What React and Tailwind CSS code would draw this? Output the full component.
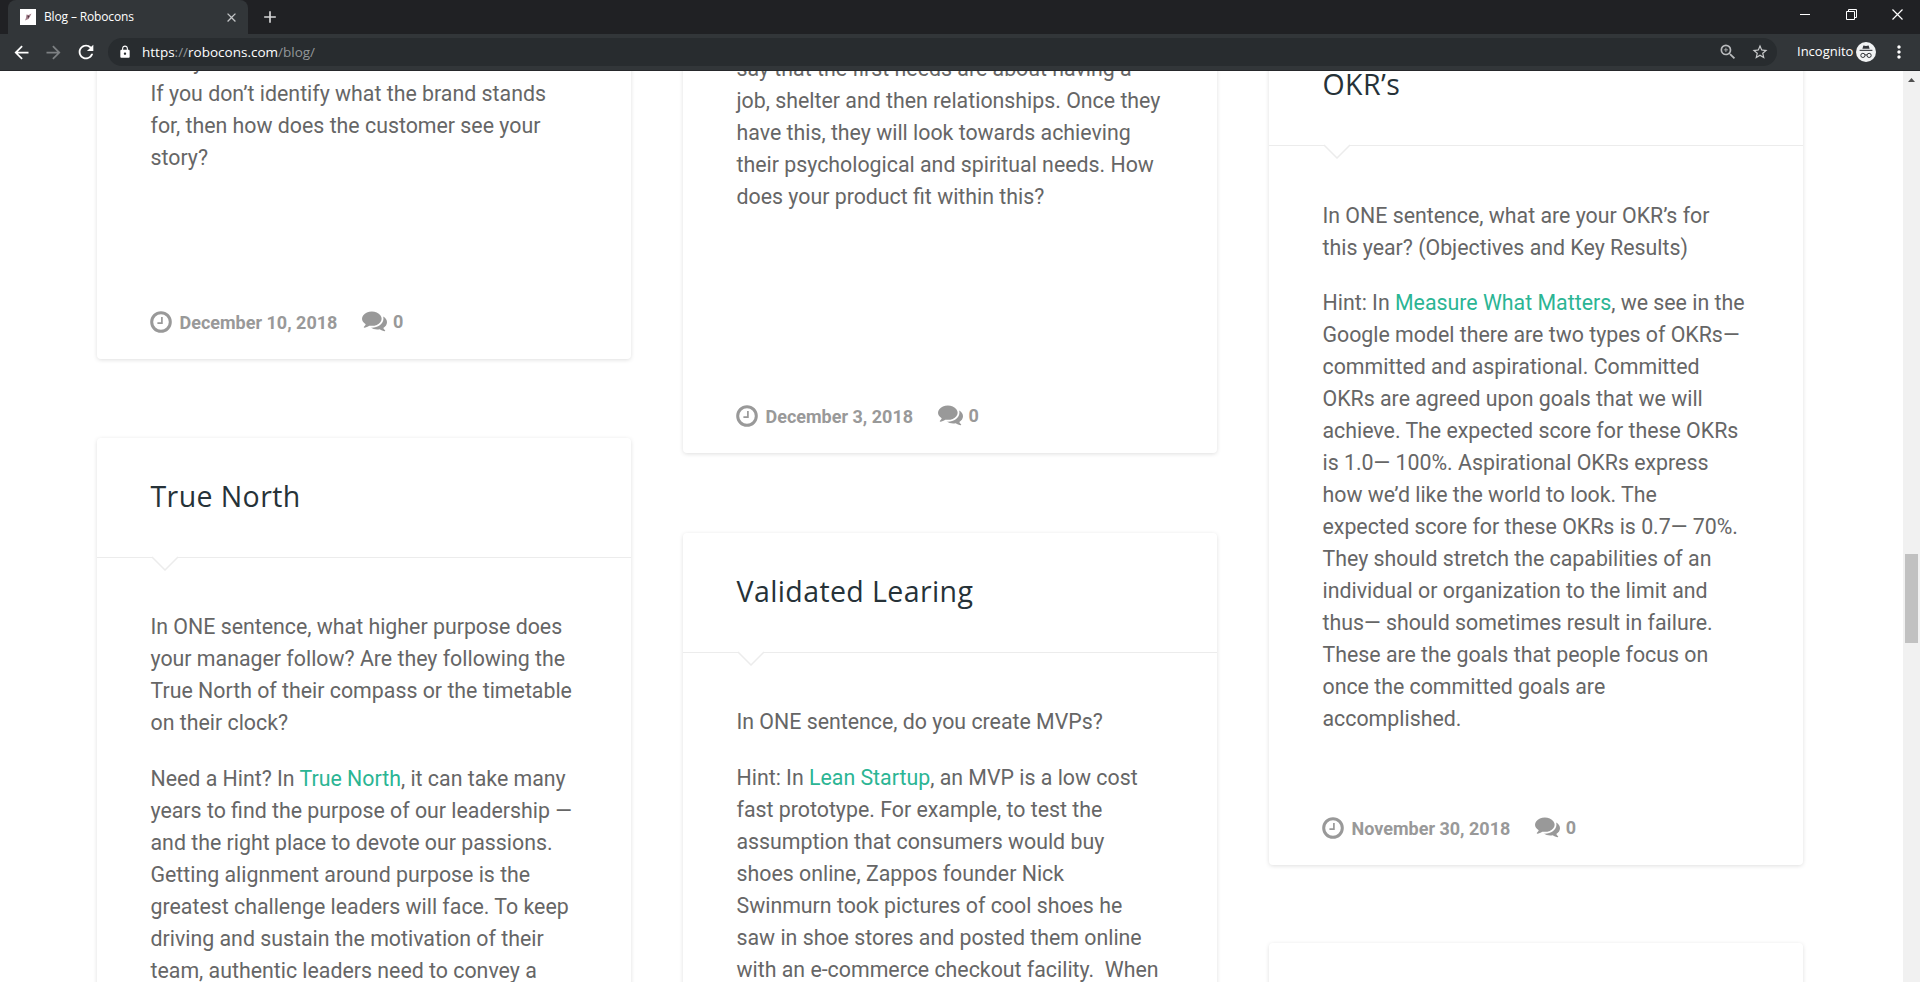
import React from 'react';
import {
  MdArrowBack, MdArrowForward, MdRefresh, MdClose, MdAdd, MdLock, MdZoomIn, MdStarBorder, MdMoreVert,
} from 'react-icons/md';

const Incognito = () => (
  <svg width="20" height="20" viewBox="0 0 20 20">
    <circle cx="10" cy="10" r="10" fill="#f1f3f4" />
    <path d="M7.4 3.4l2.6.5 2.6-.5 1 3.4H6.4z" fill="#33363a" />
    <path d="M3.6 7.8h12.8v1.1H3.6z" fill="#33363a" />
    <circle cx="6.9" cy="13.4" r="2.1" fill="none" stroke="#33363a" strokeWidth="1" />
    <circle cx="13.1" cy="13.4" r="2.1" fill="none" stroke="#33363a" strokeWidth="1" />
    <path d="M8.9 13.1q1.1-.7 2.2 0" fill="none" stroke="#33363a" strokeWidth="1" />
  </svg>
);

const Clock = () => (
  <svg width="22" height="22" viewBox="0 0 22 22" fill="none" stroke="currentColor" className="-ml-px">
    <circle cx="11" cy="11" r="9.3" strokeWidth="3" />
    <path d="M11.9 6v6.2H7.4" strokeWidth="1.7" />
  </svg>
);

const Comments = ({ className }) => (
  <svg width="25" height="25" viewBox="0 0 1792 1792" fill="currentColor" className={className}>
    <path d="M1408 768q0 139-94 257t-256.500 186.500T704 1280q-86 0-176-16-124 88-278 128-36 9-86 16h-3q-11 0-20.500-8t-11.500-21q-1-3-1-6.500t.5-6.500 2-6l2.500-5 3.500-5.500 4-5 4.500-5 4-4.500q5-6 23-25t26-29.500 22.500-29 25-38.500 20.500-44q-124-72-195-177T0 768q0-139 94-257t256.500-186.500T704 256t353.500 68.500T1314 511t94 257z" />
    <path d="M1792 1024q0 120-71 224.500t-195 176.500q10 24 20.500 44t25 38.500 22.500 29 26 29.500 23 25q1 1 4 4.500t4.500 5 4 5 3.500 5.500l2.500 5 2 6 .5 6.500-1 6.500q-3 14-13 22t-22 7q-50-7-86-16-154-40-278-128-90 16-176 16-271 0-472-132 58 4 88 4 161 0 309-45t264-129q125-92 192-212t67-254q0-77-23-152 129 71 204 178t75 230z" />
  </svg>
);

const BrowserBar = () => (
  <header className="h-[71px] shrink-0 bg-[#323639] font-['Open_Sans',sans-serif] text-white border-b border-[#26282b]">
    <div className="h-[34px] bg-[#202124] flex pl-2">
      <div className="w-[240px] h-full bg-[#323639] rounded-t-lg flex items-center pl-3 pr-[9px]">
        <span className="w-4 h-4 bg-white flex items-center justify-center">
          <svg width="8" height="8" viewBox="0 0 8 8">
            <path d="M2.5 1.5l2 .5 3-1.5-1.5 3-1.5 2.5-3.5 1.5 1-2.5z" fill="#a5808c" />
            <path d="M3.5 2.5l2 .5-1.5 2.5z" fill="#4d323e" />
          </svg>
        </span>
        <span className="ml-2 text-[12px] tracking-[-0.15px]">Blog – Robocons</span>
        <MdClose size={15} className="ml-auto text-[#c3c5c7]" />
      </div>
      <MdAdd size={20} className="ml-3 mt-[7px] text-[#d5d6d7]" />
      <div className="ml-auto flex items-center pb-[6px] pr-[17px]">
        <span className="w-[10px] h-px bg-white" />
        <svg width="11" height="11" viewBox="0 0 11 11" fill="none" stroke="#fff" className="ml-[36px]">
          <path d="M.5 2.5h8v8h-8zM2.5 2.5v-2h8v8h-2" />
        </svg>
        <svg width="11" height="11" viewBox="0 0 11 11" fill="none" stroke="#fff" strokeWidth="1.2" className="ml-[35px]">
          <path d="M.5.5l10 10M10.5.5l-10 10" />
        </svg>
      </div>
    </div>
    <div className="h-9 flex items-center px-[11px]">
      <MdArrowBack size={21} />
      <MdArrowForward size={21} className="ml-[11px] text-[#7d8083]" />
      <MdRefresh size={22} className="ml-[11px]" />
      <div className="ml-[11px] w-[1669px] h-7 rounded-full bg-[#282c2f] flex items-center pl-[10px] pr-2">
        <MdLock size={14} />
        <span className="ml-[10px] text-[13.5px] text-[#93979a]">
          <span className="text-white">https</span>://<span className="text-white">robocons.com</span>/blog/
        </span>
        <MdZoomIn size={20} className="ml-auto text-[#b9bbbd]" />
        <MdStarBorder size={18} className="ml-[13px] text-[#c9cbcc]" />
      </div>
      <span className="ml-5 text-[13px]">Incognito</span>
      <span className="ml-auto"><Incognito /></span>
      <MdMoreVert size={20} className="ml-[13px]" />
    </div>
  </header>
);

const Meta = ({ date }) => (
  <div className="flex items-center h-8 text-[18px] font-bold text-[#999999]">
    <Clock />
    <span className="ml-2">{date}</span>
    <Comments className="ml-[24.5px] -mt-1" />
    <span className="ml-[6px] -mt-[2px]">0</span>
  </div>
);

const Card = ({ className = '', children }) => (
  <article className={`shrink-0 bg-white rounded-[4px] shadow-[0_1px_4px_rgba(0,0,0,0.13)] ${className}`}>
    {children}
  </article>
);

const Title = ({ children }) => (
  <div className="relative h-[120px] border-b border-[#ececec] px-[53.5px] pt-[38px]">
    <h2 className="text-[28.5px] leading-[40px] tracking-[0.4px] text-[#263238] font-['Open_Sans',sans-serif] whitespace-nowrap">{children}</h2>
    <svg width="28" height="15" viewBox="0 0 28 15" className="absolute left-[54px] top-[118px]">
      <path d="M0 0h28L14 14.3z" fill="#fff" />
      <path d="M1 1l13 13L27 1" fill="none" stroke="#ececec" strokeWidth="1.5" />
    </svg>
  </div>
);

// Each entry is one rendered line
const Lines = ({ lines, className = '' }) => (
  <p className={`text-[21.33px] leading-[32px] text-[#666666] whitespace-pre ${className}`}>
    {lines.map((line, i) => (
      <span key={i} className="block">{line}</span>
    ))}
  </p>
);

const A = ({ children }) => <a href="#" className="text-[#2bb594]">{children}</a>;

const App = () => (
  <div className="h-[982px] w-full flex flex-col overflow-hidden bg-white font-[Roboto,sans-serif]">
    <BrowserBar />
    <div className="flex-1 min-h-0 flex">
      <main className="flex-1 h-full overflow-hidden flex gap-[52px] pl-[97px]">
        <div className="w-[534px] shrink-0 flex flex-col">
          <Card className="h-[313px] -mt-[25px] px-[53.5px]">
            <Lines lines={[
              'today.',
              'If you don’t identify what the brand stands',
              'for, then how does the customer see your',
              'story?',
            ]} />
            <div className="mt-[132px]"><Meta date="December 10, 2018" /></div>
          </Card>
          <Card className="mt-[79px] h-[700px]">
            <Title>True North</Title>
            <div className="px-[53.5px] pt-[53px]">
              <Lines lines={[
                'In ONE sentence, what higher purpose does',
                'your manager follow? Are they following the',
                'True North of their compass or the timetable',
                'on their clock?',
              ]} />
              <Lines className="mt-6" lines={[
                <>Need a Hint? In <A>True North</A>, it can take many</>,
                'years to find the purpose of our leadership —',
                'and the right place to devote our passions.',
                'Getting alignment around purpose is the',
                'greatest challenge leaders will face. To keep',
                'driving and sustain the motivation of their',
                'team, authentic leaders need to convey a',
              ]} />
            </div>
          </Card>
        </div>

        <div className="w-[534px] shrink-0 flex flex-col">
          <Card className="h-[400px] -mt-[18px] px-[53.5px]">
            <Lines lines={[
              'say that the first needs are about having a',
              'job, shelter and then relationships. Once they',
              'have this, they will look towards achieving',
              'their psychological and spiritual needs. How',
              'does your product fit within this?',
            ]} />
            <div className="mt-[187px]"><Meta date="December 3, 2018" /></div>
          </Card>
          <Card className="mt-20 h-[700px]">
            <Title>Validated Learing</Title>
            <div className="px-[53.5px] pt-[53px]">
              <Lines lines={['In ONE sentence, do you create MVPs?']} />
              <Lines className="mt-6" lines={[
                <>Hint: In <A>Lean Startup</A>, an MVP is a low cost</>,
                'fast prototype. For example, to test the',
                'assumption that consumers would buy',
                'shoes online, Zappos founder Nick',
                'Swinmurn took pictures of cool shoes he',
                'saw in shoe stores and posted them online',
                'with an e-commerce checkout facility.  When',
              ]} />
            </div>
          </Card>
        </div>

        <div className="w-[534px] shrink-0 flex flex-col">
          <Card className="h-[839px] -mt-[45px]">
            <Title>OKR’s</Title>
            <div className="px-[53.5px] pt-[54px]">
              <Lines lines={[
                'In ONE sentence, what are your OKR’s for',
                'this year? (Objectives and Key Results)',
              ]} />
              <Lines className="mt-[23px]" lines={[
                <>Hint: In <A>Measure What Matters</A>, we see in the</>,
                'Google model there are two types of OKRs—',
                'committed and aspirational. Committed',
                'OKRs are agreed upon goals that we will',
                'achieve. The expected score for these OKRs',
                'is 1.0— 100%. Aspirational OKRs express',
                'how we’d like the world to look. The',
                'expected score for these OKRs is 0.7— 70%.',
                'They should stretch the capabilities of an',
                'individual or organization to the limit and',
                'thus— should sometimes result in failure.',
                'These are the goals that people focus on',
                'once the committed goals are',
                'accomplished.',
              ]} />
              <div className="mt-[77px]"><Meta date="November 30, 2018" /></div>
            </div>
          </Card>
          <Card className="mt-[78px] h-[300px]" />
        </div>
      </main>
      <div className="w-[17px] h-full bg-[#f1f1f1] flex flex-col items-center">
        <svg width="7" height="4" viewBox="0 0 7 4" className="mt-[7px] shrink-0">
          <path d="M0 4l3.5-4L7 4z" fill="#505050" />
        </svg>
        <div className="mt-[472px] w-[13px] h-[89px] bg-[#c1c1c1]" />
      </div>
    </div>
  </div>
);

export default App;
